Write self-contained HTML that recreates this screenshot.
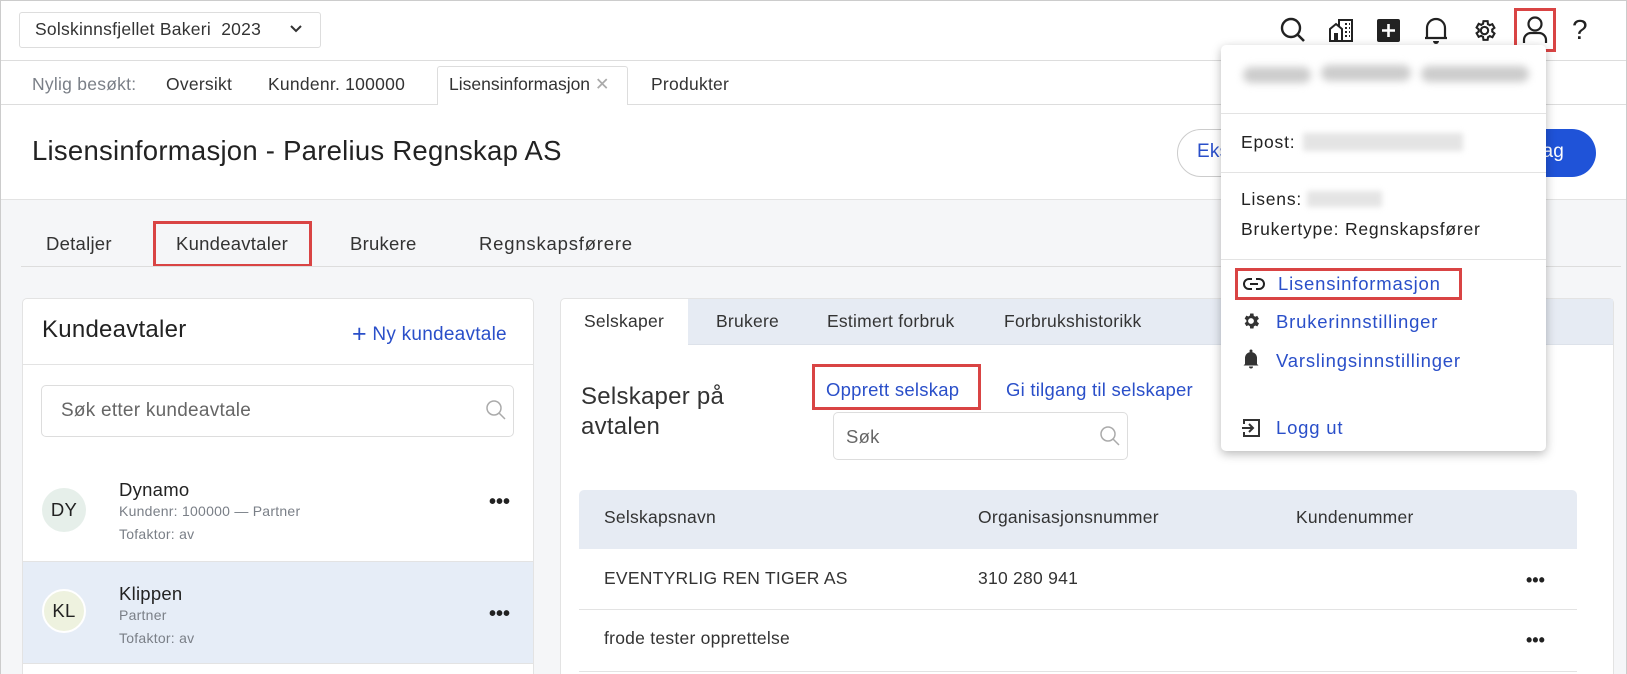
<!DOCTYPE html>
<html><head><meta charset="utf-8"><style>
*{box-sizing:border-box;margin:0;padding:0}
html{width:1627px;height:674px;overflow:hidden}
body{width:1627px;height:674px;overflow:hidden;position:relative;background:#fff;font-family:"Liberation Sans",Arial,sans-serif;color:#222;letter-spacing:.25px}
.a{position:absolute;white-space:nowrap}
.blue{color:#2a4fc9}
.red{position:absolute;border:3px solid #d94444}
.grey{color:#7a7f87}
svg{display:block}
</style></head><body>
<div class="a" style="left:0;top:0;width:1627px;height:680px;border:1px solid #ccc;z-index:50;pointer-events:none"></div>
<!-- top bar -->
<div class="a" style="left:19px;top:12px;width:302px;height:36px;border:1px solid #ddd;border-radius:3px"></div>
<div class="a" style="left:35px;top:19px;font-size:17.5px;color:#333">Solskinnsfjellet Bakeri&nbsp; 2023</div>
<svg class="a" style="left:290px;top:24px" width="12" height="10"><path d="M1 2 L6 7 L11 2" stroke="#333" stroke-width="2" fill="none"/></svg>
<div class="a" style="left:0;top:60px;width:1627px;height:1px;background:#ddd"></div>
<!-- icons -->
<svg class="a" style="left:1279px;top:16px" width="28" height="28" viewBox="0 0 28 28"><circle cx="12" cy="12" r="9" stroke="#222" stroke-width="2.4" fill="none"/><path d="M18.5 18.5 L25 25" stroke="#222" stroke-width="2.6"/></svg>
<svg class="a" style="left:1328px;top:17px" width="26" height="26" viewBox="0 0 26 26"><path d="M2 24 V12 L8 7 L14 12 V24 Z M11 9 V3 H24 V24 H14" stroke="#222" stroke-width="2" fill="none"/><rect x="6" y="16" width="4" height="8" fill="#222"/><path d="M17 7h2M21 7h1M17 11h2M21 11h1M17 15h2M21 15h1M17 19h2M21 19h1" stroke="#222" stroke-width="2"/></svg>
<svg class="a" style="left:1377px;top:19px" width="23" height="23" viewBox="0 0 23 23"><rect x="0" y="0" width="23" height="23" rx="2" fill="#222"/><path d="M11.5 5 V18 M5 11.5 H18" stroke="#fff" stroke-width="2.6"/></svg>
<svg class="a" style="left:1423px;top:16px" width="26" height="30" viewBox="0 0 26 30"><path d="M4 22 V12 a9 9 0 0 1 18 0 V22 H2 H24" stroke="#222" stroke-width="2.2" fill="none"/><path d="M10 25 a3 3 0 0 0 6 0 Z" fill="#222"/></svg>
<svg class="a" style="left:1472px;top:18px" width="25" height="25" viewBox="0 0 24 24"><path d="M12 15.5A3.5 3.5 0 1 1 12 8.5a3.5 3.5 0 0 1 0 7zM19.4 13a7.5 7.5 0 0 0 0-2l2.1-1.6-2-3.5-2.5 1a7.5 7.5 0 0 0-1.7-1L15 3h-4l-.4 2.6a7.5 7.5 0 0 0-1.7 1l-2.5-1-2 3.5L6.5 11a7.5 7.5 0 0 0 0 2l-2.1 1.6 2 3.5 2.5-1a7.5 7.5 0 0 0 1.7 1L11 21h4l.4-2.6a7.5 7.5 0 0 0 1.7-1l2.5 1 2-3.5z" stroke="#222" stroke-width="2" fill="none"/></svg>
<div class="red" style="left:1514px;top:8px;width:42px;height:44px"></div>
<svg class="a" style="left:1521px;top:15px" width="28" height="30" viewBox="0 0 28 30"><circle cx="14" cy="9" r="6.5" stroke="#222" stroke-width="2.2" fill="none"/><path d="M3 28 V25 a7 7 0 0 1 7-7 H18 a7 7 0 0 1 7 7 V28" stroke="#222" stroke-width="2.2" fill="none"/></svg>
<div class="a" style="left:1572px;top:14px;font-size:28px;color:#222">?</div>
<!-- recent tabs -->
<div class="a grey" style="left:32px;top:74px;font-size:17.5px">Nylig besøkt:</div>
<div class="a" style="left:166px;top:74px;font-size:17.5px;color:#333">Oversikt</div>
<div class="a" style="left:268px;top:74px;font-size:17.5px;color:#333">Kundenr. 100000</div>
<div class="a" style="left:437px;top:66px;width:191px;height:39px;border:1px solid #ddd;border-bottom:none;background:#fff;border-radius:3px 3px 0 0;z-index:2"></div>
<div class="a" style="left:449px;top:74px;font-size:17.5px;color:#333;z-index:3;letter-spacing:0">Lisensinformasjon <span style="color:#aaa">✕</span></div>
<div class="a" style="left:651px;top:74px;font-size:17.5px;color:#333">Produkter</div>
<div class="a" style="left:0;top:104px;width:1627px;height:1px;background:#ddd"></div>
<!-- title -->
<div class="a" style="left:32px;top:135px;font-size:27.5px;color:#222">Lisensinformasjon - Parelius Regnskap AS</div>
<div class="a" style="left:1177px;top:129px;width:100px;height:48px;border:1px solid #ccc;border-radius:24px"></div>
<div class="a blue" style="left:1197px;top:141px;font-size:19px">Eks</div>
<div class="a" style="left:1500px;top:129px;width:96px;height:48px;background:#1f53d8;border-radius:24px"></div>
<div class="a" style="left:1538px;top:141px;font-size:19px;color:#fff">lag</div>
<!-- grey area -->
<div class="a" style="left:0;top:199px;width:1627px;height:475px;background:#f5f6f8;border-top:1px solid #e3e3e3"></div>
<div class="a" style="left:46px;top:233px;font-size:18.5px;color:#333">Detaljer</div>
<div class="a" style="left:176px;top:233px;font-size:18.5px;color:#333">Kundeavtaler</div>
<div class="red" style="left:153px;top:221px;width:159px;height:46px"></div>
<div class="a" style="left:350px;top:233px;font-size:18.5px;color:#333">Brukere</div>
<div class="a" style="left:479px;top:233px;font-size:18.5px;color:#333;letter-spacing:.8px">Regnskapsførere</div>
<div class="a" style="left:21px;top:266px;width:1600px;height:1px;background:#ddd"></div>
<!-- left panel -->
<div class="a" style="left:22px;top:298px;width:512px;height:400px;background:#fff;border:1px solid #e3e3e3;border-radius:5px"></div>
<div class="a" style="left:42px;top:316px;font-size:24px;color:#222">Kundeavtaler</div>
<div class="a blue" style="left:352px;top:318px;font-size:19px"><span style="font-size:25px;position:relative;top:2px">+</span>&nbsp;Ny kundeavtale</div>
<div class="a" style="left:23px;top:364px;width:510px;height:1px;background:#e3e3e3"></div>
<div class="a" style="left:41px;top:385px;width:473px;height:52px;border:1px solid #ddd;border-radius:5px"></div>
<div class="a grey" style="left:61px;top:400px;font-size:19px;color:#666">Søk etter kundeavtale</div>
<svg class="a" style="left:485px;top:399px" width="22" height="22" viewBox="0 0 22 22"><circle cx="9" cy="9" r="7" stroke="#aaa" stroke-width="1.5" fill="none"/><path d="M14 14 L20 20" stroke="#aaa" stroke-width="1.5"/></svg>
<div class="a" style="left:42px;top:488px;width:44px;height:44px;border-radius:50%;background:#e6efea"></div>
<div class="a" style="left:42px;top:499px;width:44px;text-align:center;font-size:18.5px;color:#222">DY</div>
<div class="a" style="left:119px;top:479px;font-size:18.5px;color:#222">Dynamo</div>
<div class="a grey" style="left:119px;top:503px;font-size:14px">Kundenr: 100000 — Partner</div>
<div class="a grey" style="left:119px;top:526px;font-size:14px">Tofaktor: av</div>
<div class="a" style="left:489px;top:497px;font-size:20px;font-weight:bold;letter-spacing:0;line-height:10px">•••</div>
<div class="a" style="left:23px;top:561px;width:510px;height:103px;background:#e6edf7;border-top:1px solid #e3e3e3;border-bottom:1px solid #e3e3e3"></div>
<div class="a" style="left:42px;top:589px;width:44px;height:44px;border-radius:50%;background:#eef2df;border:2px solid #fff"></div>
<div class="a" style="left:42px;top:600px;width:44px;text-align:center;font-size:18.5px;color:#222">KL</div>
<div class="a" style="left:119px;top:583px;font-size:18.5px;color:#222">Klippen</div>
<div class="a grey" style="left:119px;top:607px;font-size:14px">Partner</div>
<div class="a grey" style="left:119px;top:630px;font-size:14px">Tofaktor: av</div>
<div class="a" style="left:489px;top:609px;font-size:20px;font-weight:bold;letter-spacing:0;line-height:10px">•••</div>
<!-- right panel -->
<div class="a" style="left:560px;top:298px;width:1054px;height:400px;background:#fff;border:1px solid #e3e3e3;border-radius:5px"></div>
<div class="a" style="left:688px;top:299px;width:925px;height:46px;background:#e6ebf3;border-bottom:1px solid #dde2ea"></div>
<div class="a" style="left:584px;top:311px;font-size:17.5px;color:#333">Selskaper</div>
<div class="a" style="left:716px;top:311px;font-size:17.5px;color:#333">Brukere</div>
<div class="a" style="left:827px;top:311px;font-size:17.5px;color:#333">Estimert forbruk</div>
<div class="a" style="left:1004px;top:311px;font-size:17.5px;color:#333">Forbrukshistorikk</div>
<div class="a" style="left:581px;top:382px;font-size:24px;color:#333;line-height:30px">Selskaper på<br>avtalen</div>
<div class="red" style="left:812px;top:364px;width:169px;height:46px"></div>
<div class="a blue" style="left:826px;top:379px;font-size:18.5px">Opprett selskap</div>
<div class="a blue" style="left:1006px;top:379px;font-size:18.5px">Gi tilgang til selskaper</div>
<div class="a" style="left:833px;top:412px;width:295px;height:48px;border:1px solid #ddd;border-radius:5px"></div>
<div class="a grey" style="left:846px;top:426px;font-size:18.5px;color:#666">Søk</div>
<svg class="a" style="left:1099px;top:425px" width="22" height="22" viewBox="0 0 22 22"><circle cx="9" cy="9" r="7" stroke="#aaa" stroke-width="1.5" fill="none"/><path d="M14 14 L20 20" stroke="#aaa" stroke-width="1.5"/></svg>
<div class="a" style="left:579px;top:490px;width:998px;height:59px;background:#e6ebf3;border-radius:5px 5px 0 0"></div>
<div class="a" style="left:604px;top:507px;font-size:17.5px;color:#333">Selskapsnavn</div>
<div class="a" style="left:978px;top:507px;font-size:17.5px;color:#333">Organisasjonsnummer</div>
<div class="a" style="left:1296px;top:507px;font-size:17.5px;color:#333">Kundenummer</div>
<div class="a" style="left:604px;top:568px;font-size:17.5px;color:#333">EVENTYRLIG REN TIGER AS</div>
<div class="a" style="left:978px;top:568px;font-size:17.5px;color:#333">310 280 941</div>
<div class="a" style="left:1526px;top:575px;font-size:18px;font-weight:bold;letter-spacing:0;line-height:10px">•••</div>
<div class="a" style="left:579px;top:609px;width:998px;height:1px;background:#e3e3e3"></div>
<div class="a" style="left:604px;top:628px;font-size:17.5px;color:#333">frode tester opprettelse</div>
<div class="a" style="left:1526px;top:635px;font-size:18px;font-weight:bold;letter-spacing:0;line-height:10px">•••</div>
<div class="a" style="left:579px;top:671px;width:998px;height:1px;background:#e3e3e3"></div>
<!-- dropdown menu -->
<div class="a" style="left:1221px;top:45px;width:325px;height:406px;background:#fff;border-radius:5px;box-shadow:0 3px 10px rgba(0,0,0,.28);z-index:10">
 <div class="a" style="left:22px;top:22px;width:68px;height:16px;background:#ccc;filter:blur(4px);border-radius:8px"></div>
 <div class="a" style="left:100px;top:20px;width:90px;height:16px;background:#ccc;filter:blur(4px);border-radius:8px"></div>
 <div class="a" style="left:200px;top:21px;width:108px;height:16px;background:#ccc;filter:blur(4px);border-radius:8px"></div>
 <div class="a" style="left:0;top:68px;width:325px;height:1px;background:#e3e3e3"></div>
 <div class="a" style="left:20px;top:87px;font-size:17.5px;color:#222;letter-spacing:.8px">Epost:</div>
 <div class="a" style="left:82px;top:88px;width:160px;height:18px;background:#e4e4e4;filter:blur(3px)"></div>
 <div class="a" style="left:0;top:127px;width:325px;height:1px;background:#e3e3e3"></div>
 <div class="a" style="left:20px;top:144px;font-size:17.5px;color:#222;letter-spacing:.8px">Lisens:</div>
 <div class="a" style="left:86px;top:146px;width:75px;height:16px;background:#e4e4e4;filter:blur(3px)"></div>
 <div class="a" style="left:20px;top:174px;font-size:17.5px;color:#222;letter-spacing:.8px">Brukertype: Regnskapsfører</div>
 <div class="a" style="left:0;top:214px;width:325px;height:1px;background:#e3e3e3"></div>
 <div class="red" style="left:14px;top:223px;width:227px;height:32px"></div>
 <svg class="a" style="left:22px;top:232px" width="22" height="14" viewBox="0 0 22 14"><path d="M9 2 H6 a5 5 0 0 0 0 10 H9 M13 2 H16 a5 5 0 0 1 0 10 H13 M7 7 H15" stroke="#222" stroke-width="2" fill="none"/></svg>
 <div class="a blue" style="left:57px;top:228px;font-size:18.5px;letter-spacing:.8px">Lisensinformasjon</div>
 <svg class="a" style="left:20px;top:266px" width="20" height="20" viewBox="0 0 24 24"><path d="M12 15.5A3.5 3.5 0 1 1 12 8.5a3.5 3.5 0 0 1 0 7zM19.4 13a7.5 7.5 0 0 0 0-2l2.1-1.6-2-3.5-2.5 1a7.5 7.5 0 0 0-1.7-1L15 3h-4l-.4 2.6a7.5 7.5 0 0 0-1.7 1l-2.5-1-2 3.5L6.5 11a7.5 7.5 0 0 0 0 2l-2.1 1.6 2 3.5 2.5-1a7.5 7.5 0 0 0 1.7 1L11 21h4l.4-2.6a7.5 7.5 0 0 0 1.7-1l2.5 1 2-3.5z" fill="#333" fill-rule="evenodd"/></svg>
 <div class="a blue" style="left:55px;top:266px;font-size:18.5px;letter-spacing:.8px">Brukerinnstillinger</div>
 <svg class="a" style="left:22px;top:304px" width="16" height="20" viewBox="0 0 16 20"><path d="M2 15 V9 a6 6 0 0 1 12 0 V15 L15.5 16.5 H0.5 Z" fill="#333"/><circle cx="8" cy="2" r="1.5" fill="#333"/><path d="M6 17.5 a2 2 0 0 0 4 0Z" fill="#333"/></svg>
 <div class="a blue" style="left:55px;top:305px;font-size:18.5px;letter-spacing:.8px">Varslingsinnstillinger</div>
 <svg class="a" style="left:20px;top:374px" width="20" height="18" viewBox="0 0 20 18"><path d="M3 5 V1 H18 V17 H3 V13" stroke="#333" stroke-width="2" fill="none"/><path d="M1 9 H12 M8 5 L12 9 L8 13" stroke="#333" stroke-width="2" fill="none"/></svg>
 <div class="a blue" style="left:55px;top:372px;font-size:18.5px;letter-spacing:.8px">Logg ut</div>
</div>
</body></html>
